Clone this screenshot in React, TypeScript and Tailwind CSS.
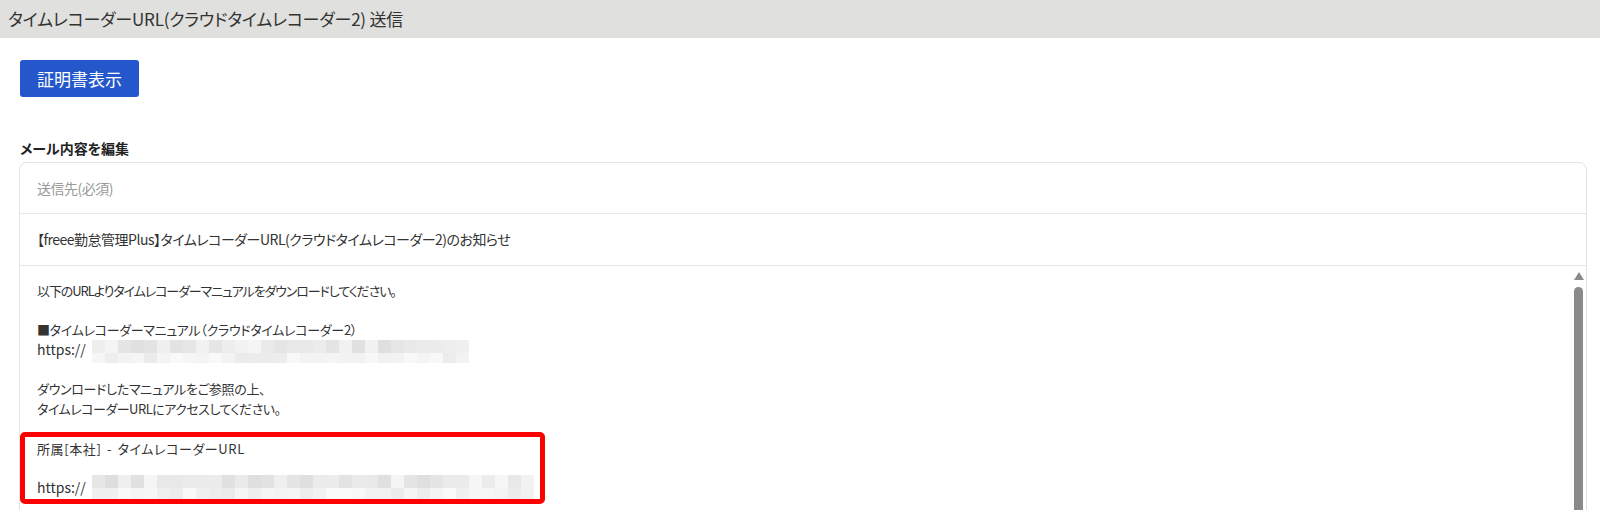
import type { FC, ReactNode } from "react";

// モザイク（ぼかし）部分の色を決めるための簡易乱数
const makeShades = (count: number, seed: number, min: number, max: number) => {
    const out: string[] = [];
    let s = seed;
    for (let i = 0; i < count; i++) {
        s = (s * 9301 + 49297) % 233280;
        const v = Math.round(min + (s / 233280) * (max - min));
        out.push(`rgb(${v},${v},${v})`);
    }
    return out;
};

interface MosaicProps {
    cols: number;
    block: number;
    rows: number[];
    seed: number;
}

const Mosaic: FC<MosaicProps> = ({ cols, block, rows, seed }) => {
    const width = cols * block;
    const height = rows.reduce((a, b) => a + b, 0);
    let y = 0;
    return (
        <svg width={width} height={height} className="shrink-0">
            {rows.map((h, r) => {
                const shades = makeShades(cols, seed + r * 77, r === 0 ? 222 : 234, r === 0 ? 246 : 250);
                const top = y;
                y += h;
                return shades.map((c, i) => (
                    <rect key={`${r}-${i}`} x={i * block} y={top} width={block} height={h} fill={c} />
                ));
            })}
        </svg>
    );
};

const Line: FC<{ children?: ReactNode; className?: string }> = ({ children, className = "" }) => (
    <div className={`h-[19.7px] leading-[19.7px] whitespace-nowrap ${className}`}>{children}</div>
);

const App: FC = () => {
    return (
        <div className="min-h-[510px] bg-white font-['Noto_Sans_CJK_JP',sans-serif] text-[#333]">

            {/* タイトルバー */}
            <div className="flex h-[38px] items-center bg-[#e0e0de] px-2 text-[17px] tracking-[-0.2px] [font-feature-settings:'palt']">
                タイムレコーダーURL(クラウドタイムレコーダー2) 送信
            </div>

            <div className="pl-5 pr-[13px]">

                {/* 証明書表示 */}
                <button className="mt-[22px] flex h-[37px] w-[119px] items-center justify-center rounded-[3px] bg-[#2557cc] text-[17px] text-white">
                    証明書表示
                </button>

                {/* 見出し */}
                <h2 className="mt-[41px] text-[14px] font-bold leading-5 text-[#222] [font-feature-settings:'palt']">
                    メール内容を編集
                </h2>

                {/* メールカード */}
                <div className="mt-1 -ml-px rounded-lg border border-[#e3e3e3] text-[14px] tracking-[-0.5px] [font-feature-settings:'palt']">

                    <div className="flex h-[51px] items-center border-b border-[#e6e6e6] px-[17px] text-[#999]">
                        送信先(必須)
                    </div>

                    <div className="flex h-[52px] items-center border-b border-[#e6e6e6] px-[17px]">
                        【freee勤怠管理Plus】タイムレコーダーURL(クラウドタイムレコーダー2)のお知らせ
                    </div>

                    <div className="flex h-[260px]">

                        {/* 本文 */}
                        <div className="flex-1 pl-[17px] pt-[15px] text-[13px] tracking-[-0.7px]">
                            <Line className="tracking-[-1.1px]">以下のURLよりタイムレコーダーマニュアルをダウンロードしてください。</Line>
                            <Line />
                            <Line className="tracking-[-0.3px]">■タイムレコーダーマニュアル（クラウドタイムレコーダー2）</Line>
                            <Line>
                                <div className="flex items-start">
                                    <span className="w-[55px] text-[14px] tracking-normal">https://</span>
                                    <Mosaic cols={29} block={13} rows={[13, 10]} seed={11} />
                                </div>
                            </Line>
                            <Line />
                            <Line className="tracking-[-0.3px]">ダウンロードしたマニュアルをご参照の上、</Line>
                            <Line className="tracking-[-0.5px]">タイムレコーダーURLにアクセスしてください。</Line>
                            <Line />

                            <div className="relative">
                                <Line className="tracking-[0.6px] [word-spacing:2px]">所属[本社] - タイムレコーダーURL</Line>
                                <Line />
                                <Line>
                                    <div className="flex items-start">
                                        <span className="w-[55px] text-[14px] tracking-normal">https://</span>
                                        <div className="-mt-[3px]">
                                            <Mosaic cols={34} block={13} rows={[13, 11]} seed={53} />
                                        </div>
                                    </div>
                                </Line>
                                <div className="absolute -top-[7px] -bottom-[6px] -left-[17px] w-[525px] rounded-[5px] border-[5px] border-[#ff0000]" />
                            </div>
                        </div>

                        {/* スクロールバー */}
                        <div className="flex w-[15px] flex-col items-center pt-[6px]">
                            <div className="h-0 w-0 border-x-[5px] border-b-[8px] border-x-transparent border-b-[#8a8a8a]" />
                            <div className="mt-[7px] w-[9px] flex-1 rounded-t-full bg-[#8a8a8a]" />
                        </div>

                    </div>
                </div>
            </div>
        </div>
    );
};

export default App;
